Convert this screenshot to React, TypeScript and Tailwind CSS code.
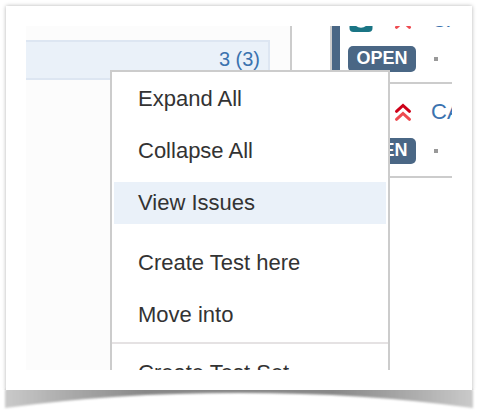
import clsx from 'clsx'

const menuGroups = [
  ['Expand All', 'Collapse All', 'View Issues'],
  ['Create Test here', 'Move into'],
]

const issues = [
  { id: 1, issueKey: 'CA', status: 'OPEN' },
  { id: 2, issueKey: 'CA', status: 'OPEN' },
]

const TestIcon: React.FC = () => (
  <svg className="shrink-0" width="25" height="24" viewBox="0 0 25 24" aria-hidden="true">
    <rect x="1.5" y="0.5" width="23" height="23.5" rx="4" fill="#1a7585" />
    <circle cx="13" cy="12" r="6.5" fill="none" stroke="#fff" strokeWidth="2.5" />
  </svg>
)

const PriorityIcon: React.FC = () => (
  <svg
    className="ml-[21px] shrink-0"
    width="18"
    height="20"
    viewBox="0 0 18 20"
    fill="none"
    strokeWidth="3"
    strokeLinecap="round"
    aria-hidden="true"
  >
    <path d="M2.5 17.3 9 11.5l6.5 5.8" stroke="#ee4a50" />
    <path d="M2.5 9.3 9 3.5l6.5 5.8" stroke="#ce0018" />
  </svg>
)

const IssueCard: React.FC<{ issue: (typeof issues)[number]; last: boolean }> = ({
  issue,
  last,
}) => (
  <li className="overflow-hidden whitespace-nowrap border-b-2 border-l-2 border-[#ccc]">
    <div
      className={clsx(
        'border-l-8 border-[#4a6785] pl-2 pt-4',
        last ? 'pb-3' : 'pb-[10px]'
      )}
    >
      <div className="flex h-6 items-center">
        <TestIcon />
        <PriorityIcon />
        <a href="#" className="ml-[19px] text-[22px] leading-6 text-[#3b73af]">
          {issue.issueKey}
        </a>
      </div>
      <div className="mt-[14px] flex items-center">
        <span className="flex h-[26px] w-[68px] shrink-0 items-center justify-center rounded-[5px] bg-[#4a6785] pb-[2px] text-lg font-bold text-white">
          {issue.status}
        </span>
        <span className="ml-[18px] size-1 bg-[#999]" />
      </div>
    </div>
  </li>
)

const MenuItem: React.FC<{ label: string; active?: boolean }> = ({ label, active }) => (
  <button
    type="button"
    role="menuitem"
    className={clsx(
      'h-[42px] shrink-0 pb-[2px] pl-6 text-left text-[22px] text-[#333]',
      active && 'bg-[#eaf1f9]'
    )}
  >
    {label}
  </button>
)

const ContextMenu: React.FC = () => (
  <div
    role="menu"
    className="absolute left-[84px] top-11 w-[280px] border-2 border-[#ccc] bg-white"
  >
    <div className="flex flex-col gap-[18px] px-[2px] py-[6px]">
      {menuGroups.map(group => (
        <div key={group[0]} className="flex flex-col gap-[10px]">
          {group.map(label => (
            <MenuItem key={label} label={label} active={label === 'View Issues'} />
          ))}
        </div>
      ))}
    </div>
    <div className="flex flex-col border-t-2 border-[#e5e2e3] px-[2px] py-2">
      <MenuItem label="Create Test Set" />
    </div>
  </div>
)

const CurledShadow: React.FC = () => (
  <svg
    className="absolute left-0 top-full h-6 w-full overflow-visible"
    viewBox="0 0 466 24"
    preserveAspectRatio="none"
    aria-hidden="true"
  >
    <defs>
      <linearGradient id="curl" x1="0" x2="1" y1="0" y2="0">
        <stop offset="0" stopColor="#cacaca" />
        <stop offset="0.12" stopColor="#aeaeae" />
        <stop offset="0.3" stopColor="#888" />
        <stop offset="0.7" stopColor="#888" />
        <stop offset="0.88" stopColor="#aeaeae" />
        <stop offset="1" stopColor="#cacaca" />
      </linearGradient>
      <filter id="soft" x="-5%" y="-30%" width="110%" height="160%">
        <feGaussianBlur stdDeviation="1.2" />
      </filter>
    </defs>
    <path d="M4-4H462L467 0V18Q360 3 233 3T-1 18V0Z" fill="url(#curl)" filter="url(#soft)" />
  </svg>
)

export default function App() {
  return (
    <main className="bg-white pb-[29px] pl-[6px] pr-[14px] pt-[6px] font-['Liberation_Sans',Arial,sans-serif]">
      <div className="relative">
        <CurledShadow />
        <div className="relative bg-white p-5 shadow-[0_0_4px_rgba(0,0,0,0.3)] [clip-path:inset(-6px_-6px_0_-6px)]">
          <div className="relative flex h-[344px] overflow-hidden">
            <section className="w-[266px] shrink-0 border-r-2 border-[#ccc] bg-[#fcfcfc] pr-5 pt-[14px]">
              <div className="flex h-10 items-center justify-end border-y-2 border-r-2 border-[#dde6f2] bg-[#eaf1f9] pb-[2px] pr-2">
                <a href="#" className="text-xl text-[#3b73af]">
                  3 (3)
                </a>
              </div>
            </section>
            <ul className="-mt-[34px] ml-[38px] min-w-0 flex-1">
              {issues.map((issue, idx) => (
                <IssueCard key={issue.id} issue={issue} last={idx === issues.length - 1} />
              ))}
            </ul>
            <ContextMenu />
          </div>
        </div>
      </div>
    </main>
  )
}
